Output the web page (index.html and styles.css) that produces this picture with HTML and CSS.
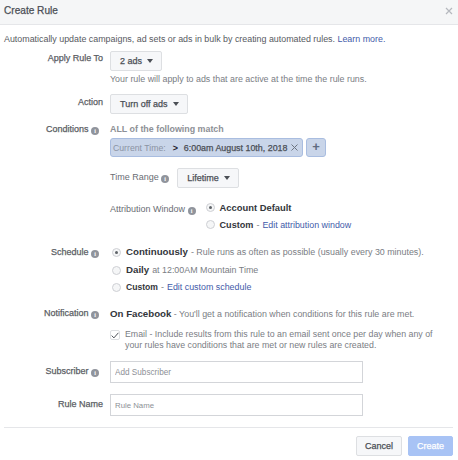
FILE: index.html
```html
<!DOCTYPE html>
<html lang="en">
<head>
    <meta charset="UTF-8">
    <title>Create Rule</title>
    <link rel="stylesheet" href="styles.css">
</head>
<body>
    <header class="header">
        <h1>Create Rule</h1>
        <svg class="close" width="8" height="8" viewBox="0 0 8 8"><path d="M1 1l6 6M7 1L1 7"/></svg>
    </header>
    <p class="intro">Automatically update campaigns, ad sets or ads in bulk by creating automated rules. <a href="#">Learn more.</a></p>

    <div class="row row-apply">
        <div class="label">Apply Rule To</div>
        <div class="field">
            <button class="drop" type="button">2 ads <i class="caret"></i></button>
            <p class="hint">Your rule will apply to ads that are active at the time the rule runs.</p>
        </div>
    </div>

    <div class="row row-action">
        <div class="label">Action</div>
        <div class="field">
            <button class="drop" type="button">Turn off ads <i class="caret"></i></button>
        </div>
    </div>

    <div class="row row-conditions">
        <div class="label label-info">Conditions <i class="info">i</i></div>
        <div class="field">
            <div class="match">ALL of the following match</div>
            <div class="chips">
                <div class="chip">
                    <span class="chip-key">Current Time:</span>
                    <b class="chip-op">&gt;</b>
                    <span class="chip-val">6:00am August 10th, 2018</span>
                    <svg class="chip-x" width="7" height="7" viewBox="0 0 7 7"><path d="M.5.5l6 6M6.5.5l-6 6"/></svg>
                </div>
                <div class="chip-add">+</div>
            </div>
            <div class="sub sub-range">
                <span class="sub-label">Time Range <i class="info">i</i></span>
                <button class="drop" type="button">Lifetime <i class="caret"></i></button>
            </div>
            <div class="sub sub-attr">
                <span class="sub-label">Attribution Window <i class="info">i</i></span>
                <div class="radios">
                    <div class="opt"><i class="radio on"></i><b class="account">Account Default</b></div>
                    <div class="opt"><i class="radio"></i><b class="attr-custom">Custom</b> <span class="dim">-</span> <a href="#">Edit attribution window</a></div>
                </div>
            </div>
        </div>
    </div>

    <div class="row row-schedule">
        <div class="label label-info">Schedule <i class="info">i</i></div>
        <div class="field">
            <div class="opt opt-first"><i class="radio on"></i><b class="big">Continuously</b> <span class="dim">- Rule runs as often as possible (usually every 30 minutes).</span></div>
            <div class="opt opt-daily"><i class="radio"></i><b class="big">Daily</b> <span class="dim">at 12:00AM Mountain Time</span></div>
            <div class="opt opt-custom"><i class="radio"></i><b class="small">Custom</b> <span class="dim">-</span> <a href="#">Edit custom schedule</a></div>
        </div>
    </div>

    <div class="row row-notify">
        <div class="label label-info">Notification <i class="info">i</i></div>
        <div class="field">
            <div class="facebook"><b class="big">On Facebook</b> <span class="dim">- You'll get a notification when conditions for this rule are met.</span></div>
            <div class="email">
                <span class="check"><svg width="8" height="7" viewBox="0 0 8 7"><path d="M.7 3.6l2.2 2.3L7.4.8"/></svg></span>
                <p>Email - Include results from this rule to an email sent once per day when any of your rules have conditions that are met or new rules are created.</p>
            </div>
        </div>
    </div>

    <div class="row row-subscriber">
        <div class="label label-info">Subscriber <i class="info">i</i></div>
        <div class="field"><input class="text" type="text" placeholder="Add Subscriber"></div>
    </div>

    <div class="row row-name">
        <div class="label">Rule Name</div>
        <div class="field"><input class="text text-small" type="text" placeholder="Rule Name"></div>
    </div>

    <footer class="footer">
        <button class="btn" type="button">Cancel</button>
        <button class="btn btn-create" type="button">Create</button>
    </footer>
</body>
</html>
```

FILE: styles.css
```css
* {
    box-sizing: border-box;
}

body {
    margin: 0;
    width: 458px;
    height: 460px;
    overflow: hidden;
    background: #fff;
    font-family: "Liberation Sans", Arial, sans-serif;
    font-size: 8.9px;
    line-height: 12px;
    color: #4b4f56;
}

a {
    color: #3f5ba9;
    text-decoration: none;
}

p {
    margin: 0;
}

.header {
    height: 25px;
    padding: 0 5px 2px 4px;
    display: flex;
    align-items: center;
    justify-content: space-between;
    background: #f5f6f7;
    border-bottom: 1px solid #e5e6e9;
}

.header h1 {
    margin: 0;
    font-size: 10.1px;
    font-weight: normal;
    -webkit-text-stroke: 0.25px #4b4f56;
    color: #4b4f56;
}

.close {
    fill: none;
    stroke: #b5b8be;
    stroke-width: 1.2;
}

.intro {
    padding: 8px 4px 0;
    height: 26px;
    color: #575a61;
}

.row {
    display: grid;
    grid-template-columns: 103px 1fr;
    column-gap: 7px;
}

.label {
    text-align: right;
    font-size: 9px;
    color: #5b5e64;
    -webkit-text-stroke: 0.25px #5b5e64;
}

.label-info {
    padding-right: 4px;
}

.info {
    display: inline-block;
    width: 8px;
    height: 8px;
    margin-left: 0;
    border-radius: 50%;
    background: #90949c;
    color: #fff;
    font: bold 6px/8px "Liberation Serif", serif;
    text-align: center;
    vertical-align: -1px;
    -webkit-text-stroke: 0;
}

.drop {
    height: 20px;
    padding: 0 8px 0 9px;
    display: inline-flex;
    align-items: center;
    gap: 5px;
    background: #f6f7f9;
    border: 1px solid #dddfe2;
    border-radius: 2px;
    font: 9px "Liberation Sans", Arial, sans-serif;
    -webkit-text-stroke: 0.25px #4b4f56;
    color: #4b4f56;
}

.caret {
    width: 0;
    height: 0;
    border-left: 3.5px solid transparent;
    border-right: 3.5px solid transparent;
    border-top: 4px solid #4b4f56;
}

.hint {
    margin-top: 2px;
    color: #7a7d84;
}

.row-apply {
    height: 43px;
}

.row-apply .label {
    padding-top: 1px;
}

.row-action .label {
    padding-top: 2px;
}

.row-action {
    height: 29px;
}

.row-conditions {
    height: 120px;
}

.match {
    font-weight: bold;
    color: #8d9096;
    height: 15px;
}

.chips {
    display: flex;
    gap: 3px;
}

.chip {
    width: 193px;
    height: 19px;
    padding: 0 4px 0 2px;
    display: flex;
    align-items: center;
    white-space: nowrap;
    background: #c9d5e9;
    border: 1px solid #a9bde0;
    border-radius: 3px;
    color: #4b4f56;
}

.chip-key {
    font-size: 8.7px;
    color: #8b93a3;
}

.chip-op {
    margin: 0 6px 0 7px;
    color: #1d2129;
}

.chip-val {
    flex: 1;
    font-size: 8.9px;
    -webkit-text-stroke: 0.25px #4b4f56;
}

.chip-x {
    fill: none;
    stroke: #6d7480;
}

.chip-add {
    width: 20px;
    height: 19px;
    background: #c9d5e9;
    border: 1px solid #a9bde0;
    border-radius: 3px;
    text-align: center;
    font: bold 13px/16px "Liberation Sans", Arial, sans-serif;
    color: #5f6b80;
}

.sub {
    display: flex;
}

.sub-label {
    white-space: nowrap;
    font-size: 9px;
    color: #6a6d74;
}

.sub-range {
    margin-top: 11px;
    height: 20px;
    gap: 8px;
}

.sub-range .sub-label {
    padding-top: 3px;
}

.sub-attr {
    margin-top: 11px;
    gap: 10px;
}

.sub-attr .sub-label {
    padding-top: 4px;
}

.opt {
    display: flex;
    align-items: center;
    gap: 3px;
    white-space: pre;
}

.radios .opt {
    height: 17px;
}

.radio {
    flex: none;
    width: 9px;
    height: 9px;
    margin-right: 2px;
    border: 1px solid #ced0d4;
    border-radius: 50%;
    background: #f5f6f7;
    position: relative;
}

.radio.on::after {
    content: "";
    position: absolute;
    left: 2px;
    top: 2px;
    width: 3px;
    height: 3px;
    border-radius: 50%;
    background: #5f6368;
}

.opt b,
.facebook b {
    color: #33363b;
}

.account {
    font-size: 9.4px;
}

.attr-custom {
    font-size: 9.1px;
}

.big {
    font-size: 9.7px;
}

.small {
    font-size: 8.6px;
}

.dim {
    color: #7a7d84;
}

.row-schedule {
    height: 64px;
}

.row-schedule .label {
    padding-top: 3px;
}

.row-schedule .field {
    padding-left: 2px;
}

.opt-first,
.opt-daily {
    height: 18px;
}

.opt-custom {
    height: 16px;
}

.row-notify {
    height: 54px;
}

.facebook {
    height: 22px;
    padding-top: 1px;
    white-space: nowrap;
}

.email {
    display: flex;
    gap: 5px;
    font-size: 8.8px;
    line-height: 11px;
    color: #7a7d84;
}

.email p {
    width: 318px;
}

.check {
    flex: none;
    width: 10px;
    height: 10px;
    margin-top: 1px;
    display: flex;
    align-items: center;
    justify-content: center;
    border: 1px solid #dddfe2;
    border-radius: 2px;
}

.check svg {
    fill: none;
    stroke: #4b4f56;
    stroke-width: 1;
}

.row-subscriber {
    height: 33px;
}

.row-subscriber .label,
.row-name .label {
    padding-top: 4px;
}

.row-name {
    height: 33px;
}

.text {
    display: block;
    width: 253px;
    height: 22px;
    padding: 0 4px;
    border: 1px solid #d3d5d9;
    font: 8.2px "Liberation Sans", Arial, sans-serif;
}

.text::placeholder {
    color: #8d9096;
}

.text-small {
    font-size: 7.8px;
}

.footer {
    margin: 0 5px 0 4px;
    padding-top: 8px;
    border-top: 1px solid #e5e6e9;
    display: flex;
    justify-content: flex-end;
    gap: 6px;
}

.btn {
    width: 46px;
    height: 20px;
    padding: 0;
    background: #f6f7f9;
    border: 1px solid #dddfe2;
    border-radius: 2px;
    font: 9px "Liberation Sans", Arial, sans-serif;
    -webkit-text-stroke: 0.25px #4b4f56;
    color: #4b4f56;
}

.btn-create {
    width: 45px;
    background: #a8c3f5;
    border-color: #a8c3f5;
    color: #fff;
    -webkit-text-stroke: 0.25px #fff;
}
```
